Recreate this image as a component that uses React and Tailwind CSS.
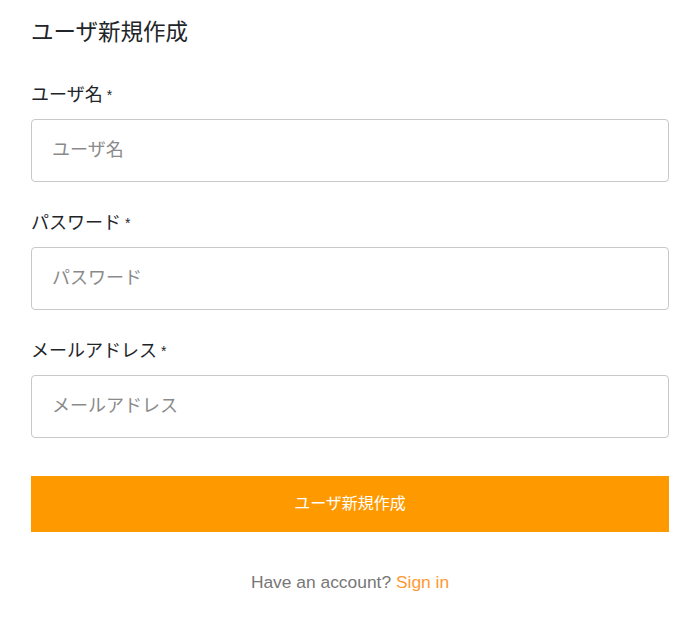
export default function App() {
  const fonts = { fontFamily: '"Liberation Sans", "Noto Sans CJK JP", sans-serif' };
  const fields = ["ユーザ名", "パスワード", "メールアドレス"];
  return (
    <div className="w-[696px] h-[627px] bg-white pl-[31px] pr-[27px] pt-[18px]" style={fonts}>
      <h1 className="text-[22.5px] leading-[30px] text-[#212529] font-normal">ユーザ新規作成</h1>
      <div className="mt-[35px] flex flex-col gap-[29px]">
        {fields.map((f) => (
          <div key={f} className="flex flex-col">
            <label className="text-[18px] leading-[24px] text-[#212529] mb-[12px]">
              {f}
              <span className="text-[14px] align-top ml-[4px]">*</span>
            </label>
            <input
              placeholder={f}
              className="h-[63px] w-full border border-[#c8c8c8] rounded-[4px] px-[20px] text-[18px] text-[#212529] placeholder:text-[#8a8a8a] outline-none"
            />
          </div>
        ))}
      </div>
      <button className="mt-[38px] w-full h-[56px] bg-[#ff9900] text-white text-[16px]">ユーザ新規作成</button>
      <p className="mt-[38px] text-center text-[17.4px] leading-[24px] text-[#777777]">
        Have an account? <a className="text-[#ff9933]">Sign in</a>
      </p>
    </div>
  );
}
